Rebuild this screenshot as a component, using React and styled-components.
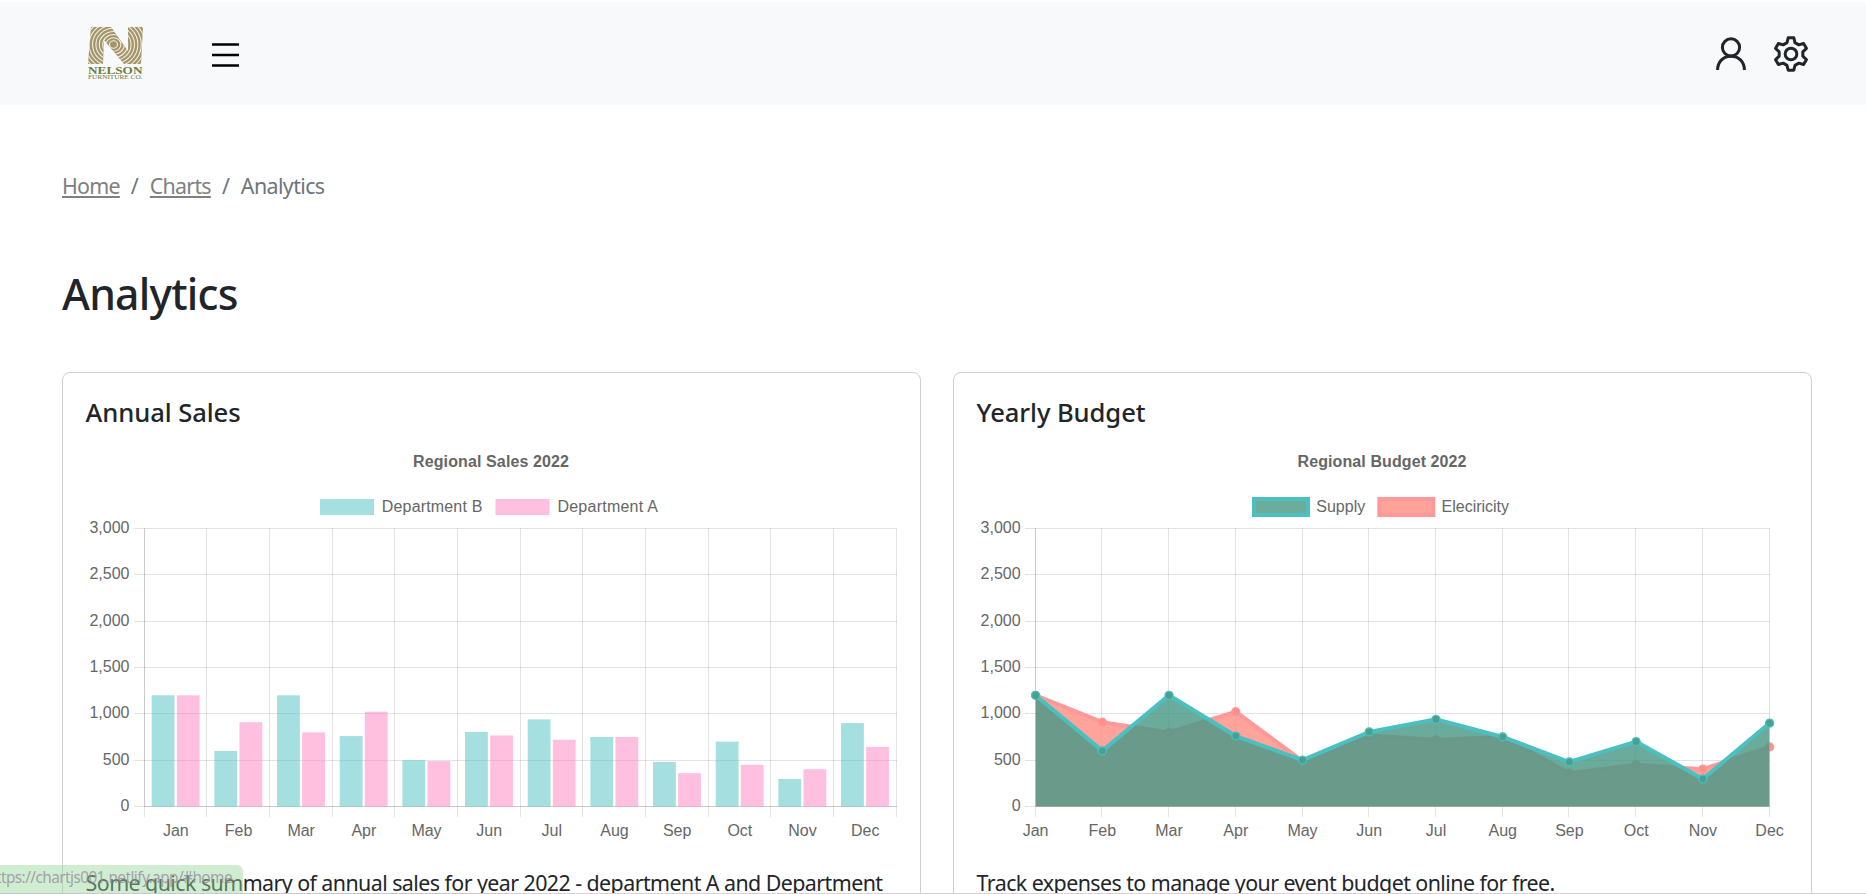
import React from 'react';
import styled, { createGlobalStyle } from 'styled-components';

const Global = createGlobalStyle`
  *, *::before, *::after { box-sizing: border-box; }
  html, body { margin: 0; height: 894px; overflow: hidden; background: #fff; }
  body {
    font-family: "Noto Sans", "Open Sans", sans-serif;
    color: #212529;
    font-size: 21.4px;
  }
`;

const Page = styled.div`
  height: 894px;
  padding-top: 2px;
  overflow: hidden;
  display: flex;
  flex-direction: column;
`;

const Header = styled.header`
  height: 103px;
  flex: none;
  background: #f8f9fb;
  display: flex;
  align-items: center;
  padding: 1px 57px 0 88.3px;
`;

const Logo = styled.svg`
  width: 56px;
  height: 54px;
  display: block;
`;

const IconButton = styled.button`
  border: 0;
  padding: 0;
  padding-top: ${(p) => p.$drop || '0'};
  background: none;
  display: block;
  margin-left: ${(p) => p.$before || '0'};
  color: ${(p) => p.$color || '#212529'};
  svg { display: block; }
`;

const Main = styled.main`
  padding: 0 54px 0 62px;
  flex: 1;
  min-height: 0;
`;

const Breadcrumb = styled.nav`
  padding-top: 65px;
  height: 98px;
  line-height: 32px;
  display: flex;
  gap: 11px;
  color: #6c757d;
`;

const Crumb = styled.span`
  color: ${(p) => (p.$link ? '#808080' : '#6c757d')};
  text-decoration: ${(p) => (p.$link ? 'underline' : 'none')};
  text-decoration-thickness: 2px;
  text-underline-offset: 2px;
  letter-spacing: ${(p) => (p.$link ? '-0.75px' : '-0.6px')};
`;

const Title = styled.h1`
  margin: 61px 0 0;
  height: 60px;
  line-height: 59px;
  font-size: 42.6px;
  font-weight: 500;
  letter-spacing: -0.75px;
`;

const Cards = styled.div`
  margin-top: 48px;
  display: grid;
  grid-template-columns: 859px 859px;
  column-gap: 32px;
`;

const Card = styled.section`
  height: 640px;
  border: 1px solid #cfcfcf;
  border-radius: 8px;
  padding: 22px 0 0 22px;
`;

const CardTitle = styled.h2`
  margin: 0;
  padding-left: 0.6px;
  height: 36px;
  line-height: 35px;
  font-size: 25.6px;
  font-weight: 500;
  letter-spacing: -0.08px;
`;

const Plot = styled.svg`
  display: block;
  width: 830px;
  height: 410px;
  margin-top: 9px;
  font-family: "Liberation Sans", Arial, sans-serif;
  font-size: 16px;
  fill: #666;
`;

const CardText = styled.p`
  margin: 17px 0 0;
  padding-left: 0.6px;
  height: 32px;
  line-height: 31px;
  white-space: nowrap;
  letter-spacing: -0.56px;
`;

const StatusLink = styled.div`
  position: absolute;
  left: 0;
  top: 865px;
  width: 243px;
  height: 29px;
  padding-right: 11px;
  border-radius: 0 6px 0 0;
  background: rgba(152, 215, 158, 0.46);
  color: rgba(150, 140, 158, 0.8);
  font-size: 15.4px;
  line-height: 26px;
  letter-spacing: -0.58px;
  display: flex;
  justify-content: flex-end;
  white-space: nowrap;
  overflow: hidden;
`;

const BottomRule = styled.div`
  position: absolute;
  left: 0;
  right: 0;
  top: 893px;
  height: 1px;
  background: linear-gradient(90deg, #c9c5c8 0 480px, #dccfd6 520px);
`;

const months = ['Jan', 'Feb', 'Mar', 'Apr', 'May', 'Jun', 'Jul', 'Aug', 'Sep', 'Oct', 'Nov', 'Dec'];
const supply = [1200, 600, 1200, 760, 500, 805, 940, 750, 480, 700, 297, 900];
const power = [1200, 910, 800, 1023, 490, 767, 720, 750, 360, 450, 403, 643];

const TOP = 88.5;
const BASE = 366.5;
const yOf = (v) => BASE - (v / 3000) * (BASE - TOP);

function Axes({ left, right, slots }) {
  const step = (right - left) / slots;
  return (
    <g>
      {[0, 500, 1000, 1500, 2000, 2500, 3000].map((v) => {
        const y = Math.floor(yOf(v)) + 0.5;
        return (
          <g key={v}>
            <path d={`M${left - 10.5} ${y}H${right + 0.5}`} stroke="#000" strokeOpacity=".11" />
            <text x={left - 15} y={y + 4} textAnchor="end">{v.toLocaleString('en-US')}</text>
          </g>
        );
      })}
      {Array.from({ length: slots + 1 }, (_, i) => {
        const x = Math.round(left + i * step) - 0.5;
        return <path key={i} d={`M${x} ${TOP}V377`} stroke="#000" strokeOpacity=".11" />;
      })}
      {months.map((m, i) => (
        <text key={m} x={left + (slots === 12 ? i + 0.5 : i) * step} y="395.5" textAnchor="middle">{m}</text>
      ))}
      <path d={`M${Math.round(left) - 0.5} ${TOP}V${BASE}H${right}`} fill="none" stroke="#000" strokeOpacity=".11" />
    </g>
  );
}

function BarChart() {
  const left = 59.5;
  const right = 811.5;
  const step = (right - left) / 12;
  const bar = (v, x, c) => (
    <rect x={x} y={yOf(v)} width="22.8" height={BASE - yOf(v)} fill={c} />
  );
  return (
    <Plot viewBox="0 0 830 410">
      <text x="406" y="26.5" textAnchor="middle" fontWeight="bold" textLength="156">Regional Sales 2022</text>
      <rect x="235" y="59" width="54" height="16" fill="#a5dfdf" />
      <text x="296.8" y="72" textLength="100.5">Department B</text>
      <rect x="410.5" y="59" width="54" height="16" fill="#ffc0df" />
      <text x="472.4" y="72" textLength="100.5">Department A</text>
      <Axes left={left} right={right} slots={12} />
      {months.map((m, i) => (
        <g key={m}>
          {bar(supply[i], left + i * step + 7.2, 'rgba(75,192,192,.5)')}
          {bar(power[i], left + i * step + 32.3, 'rgba(255,129,191,.5)')}
        </g>
      ))}
    </Plot>
  );
}

function AreaSeries({ data, left, step, line, fill, dot }) {
  const pts = data.map((v, i) => [left + i * step, yOf(v)]);
  const d = 'M' + pts.map((p) => p.join(' ')).join('L');
  return (
    <g>
      <g clipPath="url(#plot)">
        <path d={`${d}V${BASE}H${left}Z`} fill={fill} />
        <path d={d} fill="none" stroke={line} strokeWidth="4" />
      </g>
      {pts.map(([x, y]) => (
        <circle key={x} cx={x} cy={y} r="4" fill={dot} stroke={line} strokeWidth="1.3" />
      ))}
    </g>
  );
}

function AreaChart() {
  const left = 59.6;
  const right = 793.6;
  const step = (right - left) / 11;
  return (
    <Plot viewBox="0 0 830 410">
      <defs>
        <clipPath id="plot"><rect x={left} y={TOP} width={right - left} height={BASE - TOP + 0.5} /></clipPath>
      </defs>
      <text x="406" y="26.5" textAnchor="middle" fontWeight="bold" textLength="169">Regional Budget 2022</text>
      <rect x="278" y="59" width="54" height="16" fill="#6cac9b" stroke="#4bc0c0" strokeWidth="4" />
      <text x="340.3" y="72">Supply</text>
      <rect x="403.3" y="59" width="54" height="16" fill="#ffa39b" stroke="#ff9999" strokeWidth="4" />
      <text x="465.5" y="72">Eleciricity</text>
      <Axes left={left} right={right} slots={11} />
      <AreaSeries data={power} left={left} step={step} line="#ff9999" fill="rgba(255,140,130,.8)" dot="#ff8f8a" />
      <AreaSeries data={supply} left={left} step={step} line="#4bc0c0" fill="rgba(73,152,133,.82)" dot="#48a092" />
    </Plot>
  );
}

function NelsonLogo() {
  return (
    <Logo viewBox="0 0 56 54">
      <defs>
        <clipPath id="letter">
          <path d="M3 0H23L40 24V0H55L53 37H36L16 13L15 37H0Z" />
        </clipPath>
      </defs>
      <g clipPath="url(#letter)">
        <path d="M0 0H56V37H0Z" fill="#a3956a" />
        {[4, 7.4, 10.8, 14.2, 17.6, 21, 24.4, 27.8, 31.2, 34.6].map((r) => (
          <ellipse key={r} cx="25.5" cy="17.5" rx={r} ry={r * 0.92} fill="none" stroke="#f1eee2" strokeWidth="1.1" />
        ))}
      </g>
      <text x="0" y="46.8" textLength="54.5" lengthAdjust="spacingAndGlyphs" fontFamily="Liberation Serif, serif" fontWeight="bold" fontSize="10.5" fill="#6f7d3c">NELSON</text>
      <text x="0" y="52.2" textLength="54.5" lengthAdjust="spacingAndGlyphs" fontFamily="Liberation Serif, serif" fontSize="6.3" fill="#6f7d3c">FURNITURE CO.</text>
    </Logo>
  );
}

function Gear() {
  const tooth = [[-12, -34], [-8.5, -48.5], [8.5, -48.5], [12, -34]];
  const pts = [0, 1, 2, 3, 4, 5].flatMap((k) => {
    const a = (k * Math.PI) / 3;
    return tooth.map(([x, y]) => [x * Math.cos(a) - y * Math.sin(a), x * Math.sin(a) + y * Math.cos(a)].join(','));
  });
  return (
    <svg width="36" height="36" viewBox="-54 -54 108 108" fill="none" stroke="currentColor" strokeWidth="9" strokeLinejoin="round">
      <polygon points={pts.join(' ')} />
      <circle r="17.5" />
    </svg>
  );
}

export default function App() {
  return (
    <>
      <Global />
      <Page>
        <Header>
          <NelsonLogo />
          <IconButton $before="68px" $color="#000" $drop="2px" aria-label="Menu">
            <svg width="27" height="24" viewBox="0 0 27 24" stroke="currentColor" strokeWidth="2.7">
              <path d="M0 1.5H27M0 12H27M0 22.5H27" />
            </svg>
          </IconButton>
          <IconButton $before="auto" aria-label="Account">
            <svg width="30" height="34" viewBox="0 0 30 34" fill="none" stroke="currentColor" strokeWidth="3">
              <circle cx="15" cy="10.4" r="8.6" />
              <path d="M1.6 33C1.6 25 7 19.2 15 19.2S28.4 25 28.4 33" />
            </svg>
          </IconButton>
          <IconButton $before="27px" aria-label="Settings"><Gear /></IconButton>
        </Header>
        <Main>
          <Breadcrumb>
            <Crumb $link>Home</Crumb>
            <span>/</span>
            <Crumb $link>Charts</Crumb>
            <span>/</span>
            <Crumb>Analytics</Crumb>
          </Breadcrumb>
          <Title>Analytics</Title>
          <Cards>
            <Card>
              <CardTitle>Annual Sales</CardTitle>
              <BarChart />
              <CardText>Some quick summary of annual sales for year 2022 - department A and Department</CardText>
            </Card>
            <Card>
              <CardTitle>Yearly Budget</CardTitle>
              <AreaChart />
              <CardText>Track expenses to manage your event budget online for free.</CardText>
            </Card>
          </Cards>
        </Main>
        <StatusLink>https://chartjs001.netlify.app/#home</StatusLink>
        <BottomRule />
      </Page>
    </>
  );
}
